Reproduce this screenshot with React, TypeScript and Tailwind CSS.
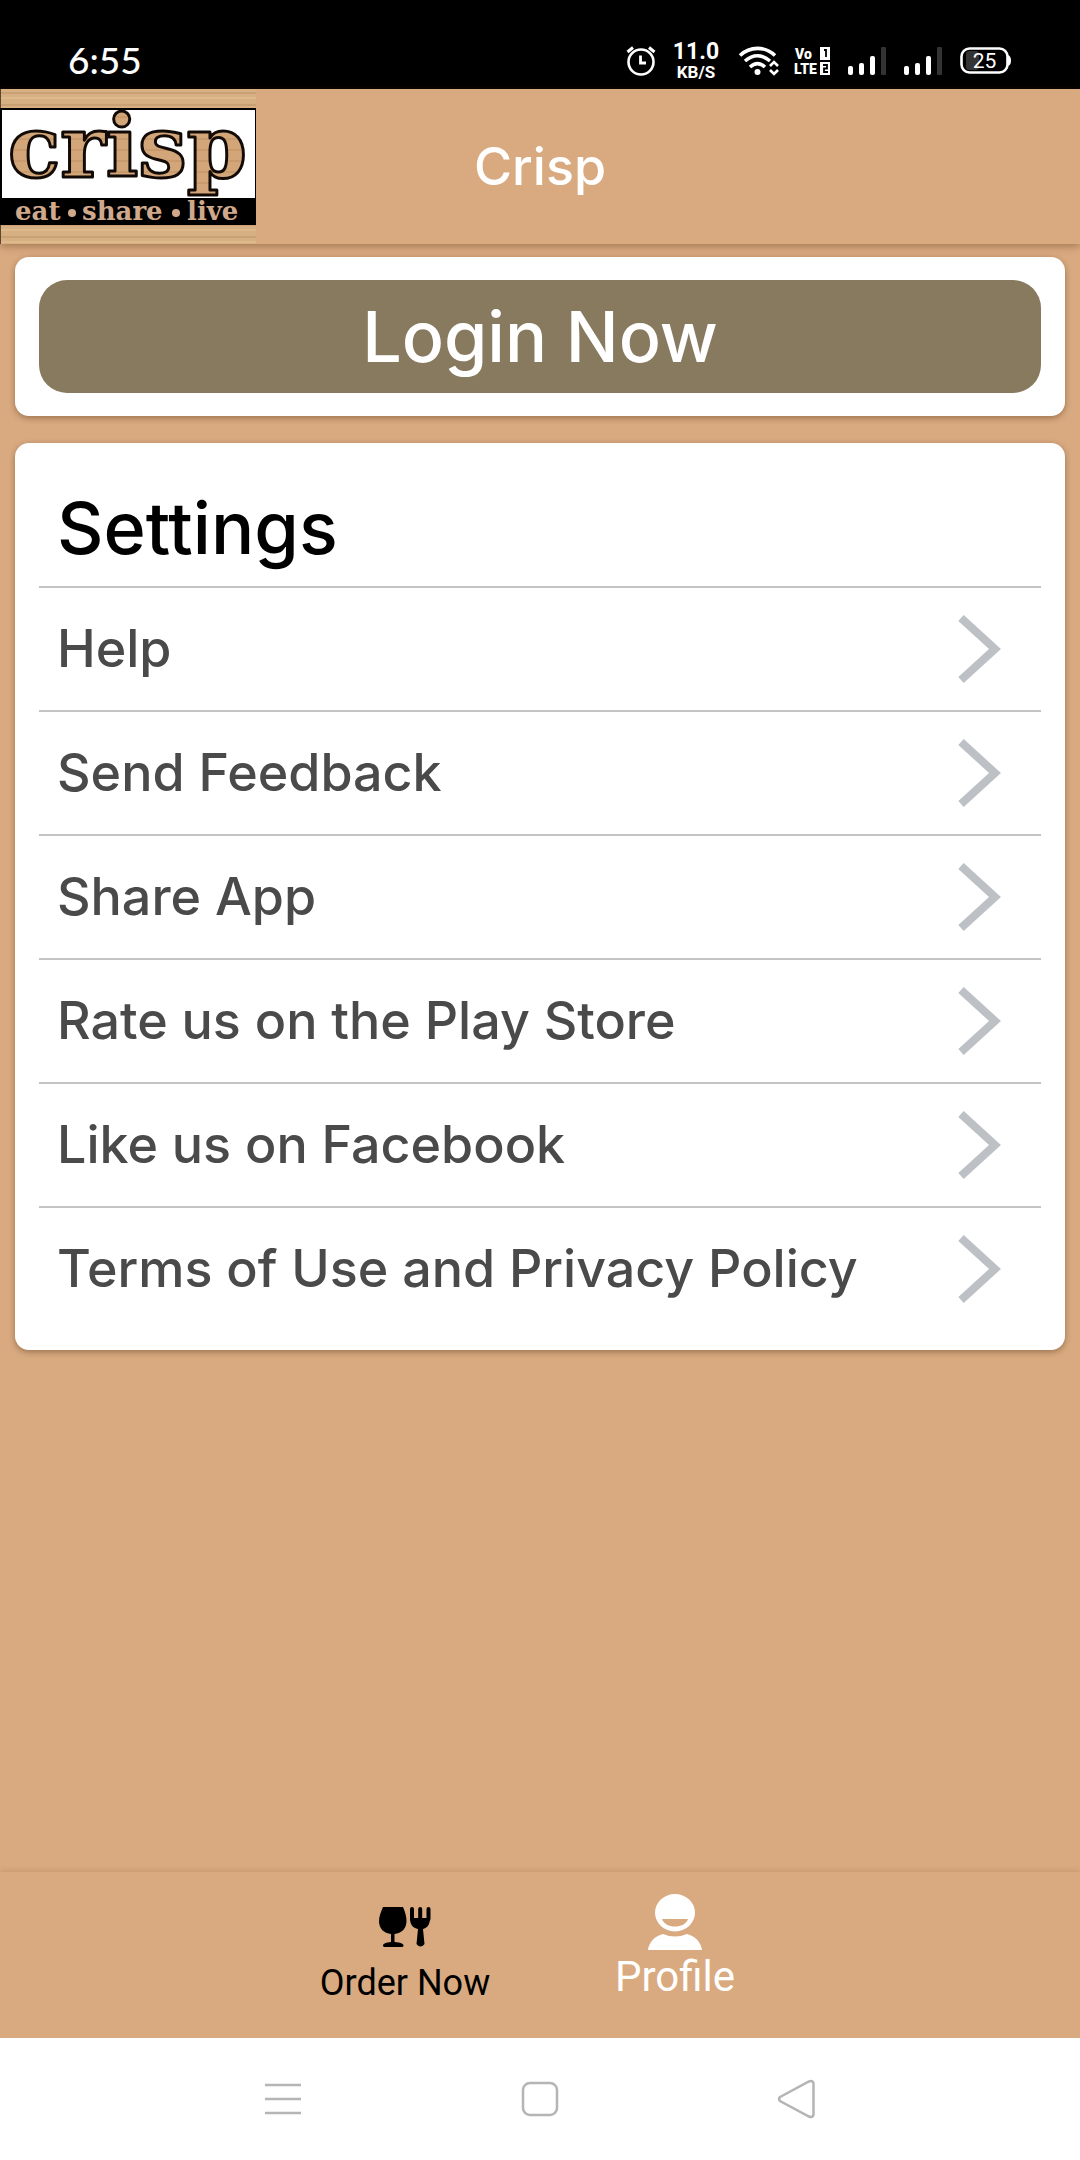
import type { ReactNode } from 'react';

const settings = [
  'Help',
  'Send Feedback',
  'Share App',
  'Rate us on the Play Store',
  'Like us on Facebook',
  'Terms of Use and Privacy Policy',
];

function Signal() {
  return (
    <svg width="38" height="28" viewBox="0 0 38 28" fill="white">
      <rect x="0" y="19" width="5" height="9" rx="2" />
      <rect x="11" y="16" width="5" height="12" rx="2" />
      <rect x="22" y="9" width="5" height="19" rx="2" />
      <rect x="33" y="0" width="5" height="28" rx="1" fill="#333" />
    </svg>
  );
}

function StatusBar() {
  return (
    <div className="flex h-[89px] items-end justify-between bg-black pr-17 pb-3 pl-17 text-white">
      <span className="font-[Lato,sans-serif] text-[37px] leading-[34px]">6:55</span>
      <div className="flex h-8 items-center">
        {/* Alarm */}
        <svg width="30" height="30" viewBox="0 0 30 30" fill="none" stroke="white" strokeWidth="2.6">
          <circle cx="15" cy="16" r="12.5" />
          <path d="M14.5 9.5v7.5h5.5" strokeWidth="2.8" />
          <path d="M1.5 6 7 1.5M28.5 6 23 1.5" strokeWidth="3" />
        </svg>
        <div className="ml-4 flex w-12 flex-col items-center font-[Roboto,sans-serif] font-bold">
          <span className="text-[23px] leading-[22px]">11.0</span>
          <span className="text-[17px] leading-[18px]">KB/S</span>
        </div>
        {/* Wi-Fi */}
        <svg className="ml-4.5" width="42" height="30" viewBox="0 0 42 30" fill="none" stroke="white" strokeWidth="3.6">
          <path d="M2 9.5C12 0 27 0 37 9.5" />
          <path d="M7 15C15 8 24 8 32 15" />
          <path d="M12 21C17 16.5 22 16.5 27 21" />
          <circle cx="19.5" cy="26" r="3" fill="white" stroke="none" />
          <path d="m32 20 4-4 4 4M32 24l4 4 4-4" strokeWidth="2.6" />
        </svg>
        {/* VoLTE, both SIM slots */}
        <svg className="ml-3.5" width="36" height="34" viewBox="0 0 36 34" fill="white">
          <g fontFamily="'Liberation Sans Narrow', Roboto, sans-serif" fontWeight="900" fontSize="14">
            <text x="1" y="15">Vo</text>
            <text x="0" y="30">LTE</text>
          </g>
          <rect x="26" y="3" width="10" height="13" />
          <rect x="26" y="18" width="10" height="13" />
          <path d="M30 6h2v7M29 21h4v3.5h-3v3.5h4" fill="none" stroke="black" strokeWidth="1.8" />
        </svg>
        <div className="ml-4.5 flex gap-4.5">
          <Signal />
          <Signal />
        </div>
        {/* Battery */}
        <svg className="ml-4.5" width="52" height="28" viewBox="0 0 52 28">
          <rect x="6" y="4" width="13" height="19" rx="3" fill="#333" />
          <rect x="1.5" y="1.5" width="46" height="24" rx="8" fill="none" stroke="white" strokeWidth="2.6" />
          <path d="M48 8q3 1 3 5.5t-3 5.5z" fill="white" />
          <text x="24.5" y="20.5" textAnchor="middle" fontSize="21" fontWeight="400" fill="white" fontFamily="Roboto, sans-serif">25</text>
        </svg>
      </div>
    </div>
  );
}

function Logo() {
  return (
    <svg className="w-64 shrink-0" height="155" viewBox="0 0 256 155" role="img" aria-label="crisp eat share live">
      <defs>
        <pattern id="wood" width="256" height="12" patternUnits="userSpaceOnUse">
          <rect width="256" height="12" fill="#d6b083" />
          <rect width="256" height="2" y="3" fill="#caa175" />
          <rect width="256" height="2" y="8" fill="#deb98c" />
        </pattern>
        <pattern id="letters" width="256" height="11" patternUnits="userSpaceOnUse">
          <rect width="256" height="11" fill="#d3a679" />
          <rect width="256" height="2" y="5" fill="#c99a6c" />
        </pattern>
      </defs>
      <rect width="256" height="155" fill="url(#wood)" />
      <rect width="1" height="155" fill="#5b4630" />
      <rect y="19" width="256" height="117" fill="black" />
      <rect x="2" y="21" width="253" height="88" fill="white" />
      <g fontFamily="'DejaVu Serif', serif" fontWeight="bold">
        <text x="8" y="88" fontSize="86" fill="url(#letters)" stroke="#120a06" strokeWidth="3" strokeLinejoin="round">
          crisp
        </text>
        <g fontSize="26" fill="#d0a98c">
          <text x="15" y="131">eat</text>
          <text x="82" y="131">share</text>
          <text x="187" y="131">live</text>
        </g>
      </g>
      <circle cx="72" cy="124" r="4" fill="#d0a98c" />
      <circle cx="176" cy="124" r="4" fill="#d0a98c" />
    </svg>
  );
}

function Card({ children }: { children: ReactNode }) {
  return (
    <section className="rounded-[14px] bg-white px-6 shadow-[0_2px_6px_rgba(60,30,0,0.4)]">{children}</section>
  );
}

export default function App() {
  return (
    <div className="flex min-h-screen flex-col bg-[#d9aa80] font-[Inter,sans-serif] font-medium">
      <StatusBar />

      {/* Header */}
      <header className="grid grid-cols-[1fr_auto_1fr] items-center shadow-[0_2px_8px_rgba(80,40,0,0.4)]">
        <Logo />
        <h1 className="text-[52px] leading-[60px] text-white">Crisp</h1>
      </header>

      <main className="flex flex-1 flex-col gap-[27px] px-[15px] pt-[13px]">
        <Card>
          <div className="py-[23px]">
            <button className="h-[113px] w-full rounded-[28px] bg-[#877a5e] text-[70px] leading-[80px] text-white">
              Login Now
            </button>
          </div>
        </Card>

        <Card>
          <h2 className="px-4.5 pt-[45px] pb-[18px] text-[72px] leading-[80px] text-black">Settings</h2>
          <ul className="pb-5">
            {settings.map((label) => (
              <li key={label} className="border-t-2 border-[#c4c4c4]">
                <a href="#" className="flex h-[122px] items-center justify-between pr-10 pl-4.5 text-[52px] leading-[60px] text-[#4a4a4a]">
                  {label}
                  <svg width="44" height="70" viewBox="0 0 44 70" fill="none" stroke="#bdc1c5" strokeWidth="8">
                    <path d="M4 4 38 35 4 66" />
                  </svg>
                </a>
              </li>
            ))}
          </ul>
        </Card>
      </main>

      {/* Tabs */}
      <nav className="flex h-[166px] justify-center font-[Roboto,sans-serif] font-normal shadow-[0_-1px_6px_rgba(120,70,20,0.2)]">
        <a href="#" className="flex w-[270px] flex-col items-center pt-[35px] text-[36px] leading-[40px] text-black">
          <svg className="mb-4" width="52" height="40" viewBox="0 0 52 40" fill="currentColor">
            <path d="M4 0h20c2 5 3.5 9 3.5 14 0 8-5 12-12 13v8c6 .5 9 1.5 9 3.5 0 1-1 1.5-2 1.5H6c-1 0-2-.5-2-1.5 0-2 3-3 8-3.5v-8C5 26 0 22 0 14 0 9 2 5 4 0z" />
            <path d="M31 11h20c0 7-3 10-7 11l1.5 15q-4 5-8 0L39 22c-5-1-8-4-8-11z" />
            <path d="M33 2v10M41.2 2v10M49.5 2v10" stroke="currentColor" strokeWidth="4" strokeLinecap="round" />
          </svg>
          Order Now
        </a>
        <a href="#" className="flex w-[270px] flex-col items-center pt-[22px] text-[42px] leading-[46px] text-white">
          <svg className="mb-1" width="54" height="56" viewBox="0 0 54 56" fill="currentColor">
            <path fillRule="evenodd" d="M27 0a20 18.7 0 0 1 0 37.4a20 18.7 0 0 1 0-37.4zM14 25c3 10 23 10 26 0z" />
            <path d="M0 56c1-8 7-14 15-16q12 5 24 0c8 2 14 8 15 16z" />
          </svg>
          Profile
        </a>
      </nav>

      {/* System navigation */}
      <div className="flex h-[122px] items-center justify-center gap-[217px] bg-white">
        <button aria-label="Recent apps">
          <svg width="40" height="40" viewBox="0 0 40 40" fill="none" stroke="#b5b5b5" strokeWidth="2.5">
            <path d="M2 6h36M2 20h36M2 34h36" />
          </svg>
        </button>
        <button aria-label="Home">
          <svg width="40" height="40" viewBox="0 0 40 40" fill="none" stroke="#b5b5b5" strokeWidth="2.5">
            <rect x="3" y="4" width="34" height="32" rx="7" />
          </svg>
        </button>
        <button aria-label="Back">
          <svg width="40" height="40" viewBox="0 0 40 40" fill="none" stroke="#b5b5b5" strokeWidth="2.5">
            <path d="M3 18 32 2.5q4-1.5 4.5 2v31q-.5 3.5-4.5 2L3 22q-2-2 0-4z" />
          </svg>
        </button>
      </div>
    </div>
  );
}
